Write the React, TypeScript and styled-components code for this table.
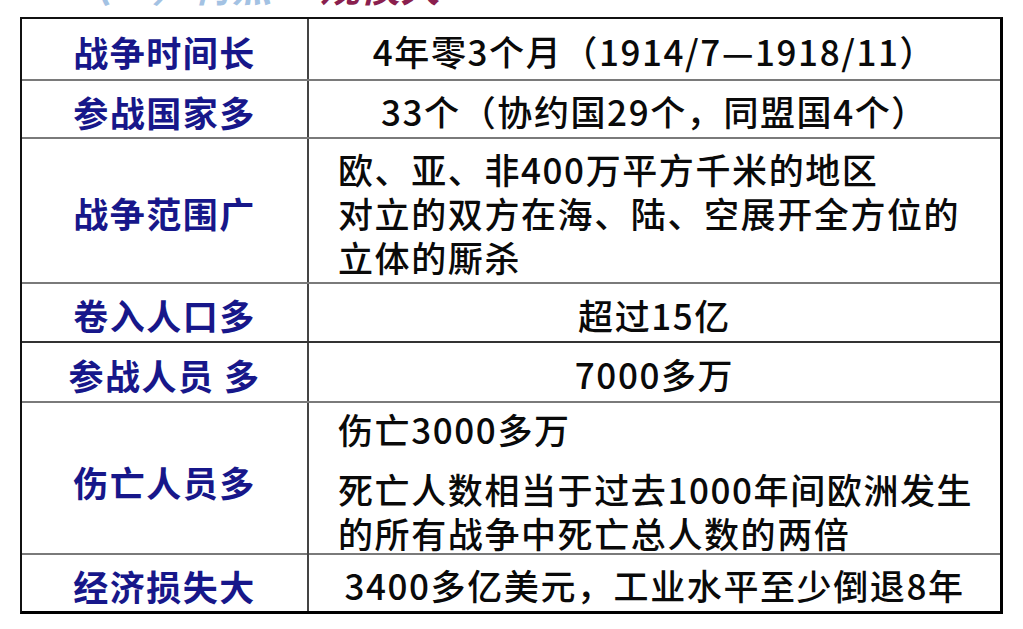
import React from 'react';
import styled, { createGlobalStyle } from 'styled-components';

const GlobalStyle = createGlobalStyle`
  html, body {
    margin: 0;
    padding: 0;
    background: #fff;
  }
  body {
    font-family: "Noto Sans CJK SC", "Noto Sans", sans-serif;
  }
`;

const Page = styled.div`
  width: 1023px;
  height: 629px;
  background: #fff;
  overflow: hidden;
`;

// only the bottom of the slide title survives the crop
const TitleStrip = styled.div`
  height: 17px;
  overflow: hidden;
  display: flex;
  align-items: flex-start;
  padding-left: 72px;
  gap: 48px;
`;

const TitlePart = styled.span<{ $tone: 'blue' | 'red' }>`
  margin-top: -35px;
  font-size: 40px;
  line-height: 40px;
  font-weight: 700;
  font-style: italic;
  color: ${(p) => (p.$tone === 'blue' ? '#4a86c8' : '#8a1f4e')};
  ${(p) => (p.$tone === 'blue' ? 'opacity: 0.5;' : '')}
`;

const Table = styled.div`
  margin-left: 20px;
  width: 983px;
  box-sizing: border-box;
  border-top: 2px solid #111;
  border-left: 2px solid #111;
  border-right: 3px solid #000;
  border-bottom: 3px solid #000;
`;

const Row = styled.div<{ $h: number; $first?: boolean; $dark?: boolean }>`
  display: grid;
  grid-template-columns: 285px 2px 1fr;
  height: ${(p) => p.$h}px;
  box-sizing: border-box;
  border-top: ${(p) => (p.$first ? 'none' : p.$dark ? '2px solid #333' : '2px solid #7a7a7a')};
`;

const Divider = styled.div`
  background: #444;
`;

const Label = styled.div`
  display: flex;
  align-items: center;
  justify-content: center;
  font-size: 35px;
  font-weight: 700;
  letter-spacing: 1.5px;
  color: #17178a;
  white-space: pre;
  padding-top: 4px;
`;

const Value = styled.div<{ $align?: 'center' | 'left' }>`
  display: flex;
  flex-direction: column;
  justify-content: center;
  align-items: ${(p) => (p.$align === 'left' ? 'flex-start' : 'center')};
  padding-left: ${(p) => (p.$align === 'left' ? '29px' : '0')};
  padding-top: 4px;
  font-size: 35px;
  font-weight: 500;
  letter-spacing: 1.6px;
  color: #0a0a0a;
  white-space: nowrap;
`;

const Line = styled.div<{ $gap?: number }>`
  line-height: 44px;
  margin-top: ${(p) => p.$gap ?? 0}px;
`;

type RowData = {
  label: string;
  h: number;
  dark?: boolean;
  lines: { text: string; gap?: number }[];
  align?: 'center' | 'left';
};

const rows: RowData[] = [
  { label: '战争时间长', h: 60, lines: [{ text: '4年零3个月（1914/7—1918/11）' }] },
  { label: '参战国家多', h: 58, lines: [{ text: '33个（协约国29个，同盟国4个）' }] },
  {
    label: '战争范围广',
    h: 145,
    align: 'left',
    lines: [
      { text: '欧、亚、非400万平方千米的地区' },
      { text: '对立的双方在海、陆、空展开全方位的' },
      { text: '立体的厮杀' },
    ],
  },
  { label: '卷入人口多', h: 59, lines: [{ text: '超过15亿' }] },
  { label: '参战人员 多', h: 60, dark: true, lines: [{ text: '7000多万' }] },
  {
    label: '伤亡人员多',
    h: 152,
    align: 'left',
    lines: [
      { text: '伤亡3000多万' },
      { text: '死亡人数相当于过去1000年间欧洲发生', gap: 16 },
      { text: '的所有战争中死亡总人数的两倍' },
    ],
  },
  { label: '经济损失大', h: 58, lines: [{ text: '3400多亿美元，工业水平至少倒退8年' }] },
];

const App: React.FC = () => {
  return (
    <Page>
      <GlobalStyle />
      <TitleStrip>
        <TitlePart $tone="blue">（一）特点</TitlePart>
        <TitlePart $tone="red">规模大</TitlePart>
      </TitleStrip>
      <Table>
        {rows.map((r, i) => (
          <Row key={r.label} $h={r.h} $first={i === 0} $dark={r.dark}>
            <Label>{r.label}</Label>
            <Divider />
            <Value $align={r.align}>
              {r.lines.map((l) => (
                <Line key={l.text} $gap={l.gap}>
                  {l.text}
                </Line>
              ))}
            </Value>
          </Row>
        ))}
      </Table>
    </Page>
  );
};

export default App;
